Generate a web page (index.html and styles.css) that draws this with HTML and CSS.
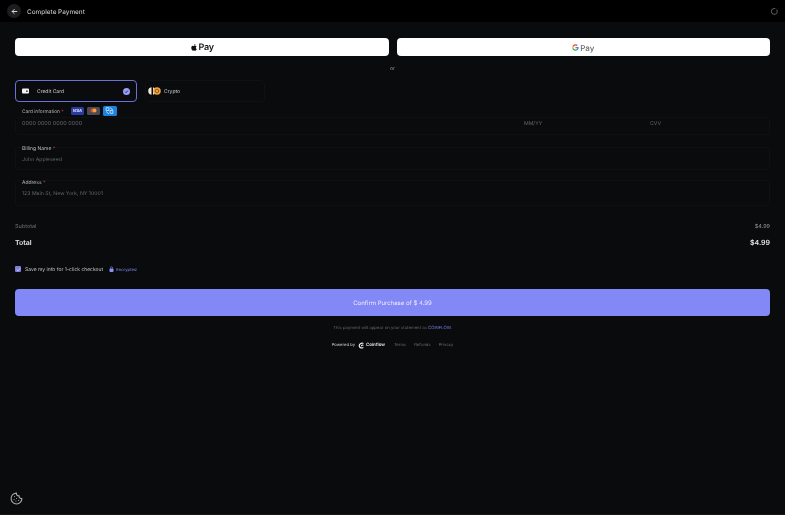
FILE: index.html
```html
<!DOCTYPE html>
<html lang="en">
<head>
<meta charset="utf-8">
<title>Complete Payment</title>
<link rel="stylesheet" href="styles.css">
</head>
<body>
<div class="page">
  <header class="top">
    <div class="top-left">
      <button class="back" aria-label="Back">
        <svg width="7" height="7" viewBox="0 0 24 24" fill="none" stroke="#d8d8d8" stroke-width="3.4" stroke-linecap="round" stroke-linejoin="round"><path d="M20 12H4M11 5l-7 7 7 7"/></svg>
      </button>
      <span class="title">Complete Payment</span>
    </div>
    <svg class="spinner" width="7" height="7" viewBox="0 0 24 24" fill="none" stroke="#5a5a5a" stroke-width="3.5" stroke-linecap="round"><path d="M20 7a10 10 0 1 1-6-4.8"/></svg>
  </header>
  <main class="main">
    <div class="wallets">
      <button class="wallet apple"><svg width="8" height="9" viewBox="0 0 24 24" fill="#111"><path d="M17.6 12.7c0-2.6 2.1-3.8 2.2-3.9-1.2-1.8-3.1-2-3.7-2-1.6-.2-3.1.9-3.9.9s-2-.9-3.3-.9c-1.7 0-3.3 1-4.2 2.5-1.8 3.1-.5 7.7 1.3 10.2.9 1.2 1.9 2.6 3.2 2.5 1.3-.1 1.8-.8 3.3-.8s2 .8 3.3.8c1.4 0 2.2-1.2 3.1-2.5 1-1.4 1.4-2.8 1.4-2.9-.1 0-2.7-1-2.7-4.4zM15.1 5c.7-.9 1.2-2 1-3.2-1 0-2.2.7-3 1.5-.6.7-1.2 1.9-1 3.1 1.1 0 2.3-.6 3-1.4z"/></svg><span class="apple-text">Pay</span></button>
      <button class="wallet google"><svg width="7" height="7" viewBox="0 0 24 24"><path fill="#4285f4" d="M23 12.3c0-.8-.1-1.600-.2-2.300H12v4.400h6.200c-.3 1.400-1.100 2.600-2.300 3.400v2.800h3.700c2.200-2 3.400-5 3.400-8.300z"/><path fill="#34a853" d="M12 23.500c3.100 0 5.700-1 7.600-2.800l-3.700-2.900c-1 .7-2.300 1.100-3.900 1.100-3 0-5.500-2-6.400-4.700H1.800V17.100c1.900 3.800 5.800 6.400 10.200 6.400z"/><path fill="#fbbc05" d="M5.600 14.200c-.5-1.400-.5-3 0-4.400V6.900H1.800c-1.600 3.200-1.600 7 0 10.200z"/><path fill="#ea4335" d="M12 5c1.700 0 3.200.6 4.400 1.700l3.300-3.300C17.700 1.500 15.100.5 12 .5 7.600.5 3.700 3.100 1.800 6.900l3.800 2.900C6.500 7 9 5 12 5z"/></svg><span class="google-text">Pay</span></button>
    </div>
    <div class="or">or</div>
    <div class="tabs">
      <div class="tab tab-active">
        <svg class="tab-card" width="7" height="6" viewBox="0 0 14 12"><rect y="1" width="14" height="10" rx="2" fill="#f2f2f2"/><rect x="8" y="5" width="3.500" height="2.500" fill="#222"/></svg>
        <span class="tab-label">Credit Card</span>
        <svg class="tab-check" width="7" height="7" viewBox="0 0 14 14"><circle cx="7" cy="7" r="7" fill="#9a9ef8"/><path d="M4 7.200l2.100 2.100L10 5" fill="none" stroke="#1b1d60" stroke-width="1.900"/></svg>
      </div>
      <div class="tab tab-plain">
        <svg width="13" height="8" viewBox="0 0 26 16"><circle cx="8" cy="8" r="7.500" fill="#f3ead9"/><rect x="7" y="0" width="3" height="16" fill="#0a0b0d"/><circle cx="18" cy="8" r="7.500" fill="#f0a23e"/><circle cx="18" cy="8" r="3.500" fill="none" stroke="#7a4a10" stroke-width="1.500"/></svg>
        <span class="tab-label">Crypto</span>
      </div>
    </div>
    <div class="card-label-row">
      <span class="label label-card">Card information <em>*</em></span>
      <span class="brand visa">VISA</span>
      <span class="brand mc"><svg width="7" height="5" viewBox="0 0 14 10"><circle cx="5" cy="5" r="4" fill="#e8432e"/><circle cx="9" cy="5" r="4" fill="#f3a23a"/></svg></span>
      <span class="brand amex"><svg width="9" height="9" viewBox="0 0 16 16" fill="none" stroke="#cfe6fb" stroke-width="1.500"><path d="M2 3h5v5H2zM9 8h5v5H9zM9 3l5 4M2 10l5 4"/></svg></span>
    </div>
    <div class="field card-row">
      <span class="ph ph-num">0000 0000 0000 0000</span>
      <span class="ph ph-exp">MM/YY</span>
      <span class="ph ph-cvv">CVV</span>
    </div>
    <div class="field field-name">
      <span class="label">Billing Name <em>*</em></span>
      <span class="ph">John Appleseed</span>
    </div>
    <div class="field field-addr">
      <span class="label">Address <em>*</em></span>
      <span class="ph">123 Main St, New York, NY 10001</span>
    </div>
    <div class="line subtotal"><span>Subtotal</span><span>$4.99</span></div>
    <div class="line total"><span>Total</span><span>$4.99</span></div>
    <div class="save">
      <span class="check"><svg width="5" height="5" viewBox="0 0 10 10"><path d="M1.500 5.200l2.300 2.300L8.500 2.500" fill="none" stroke="#e6e8ff" stroke-width="1.500"/></svg></span>
      <span class="save-text">Save my info for 1-click checkout</span>
      <svg class="lock" width="5" height="6" viewBox="0 0 10 12"><rect x="1" y="5" width="8" height="7" rx="1.500" fill="#8b90f5"/><path d="M3 5V3.500a2 2 0 0 1 4 0V5" fill="none" stroke="#8b90f5" stroke-width="1.300"/></svg>
      <span class="enc">Encrypted</span>
    </div>
    <button class="confirm"><span class="confirm-text">Confirm Purchase of $ 4.99</span></button>
    <p class="statement">This payment will appear on your statement as <b>COINFLOW.</b></p>
    <div class="foot">
      <span class="powered">Powered by</span>
      <svg class="cf-logo" width="6" height="7" viewBox="0 0 12 14" fill="none" stroke="#ececec" stroke-width="2.400" stroke-linecap="round"><path d="M10 2.500C6 1.500 2.500 4 2.500 7.500S6 12.500 10 11.500"/><path d="M10 6.500C8.500 6 7 6.500 7 7.500"/></svg>
      <span class="cf-name">Coinflow</span>
      <span class="foot-links"><span>Terms</span><span>Refunds</span><span>Privacy</span></span>
    </div>
  </main>
  <button class="cookie" aria-label="Cookies">
    <svg width="13" height="13" viewBox="0 0 24 24" fill="none" stroke="#a8a8a8" stroke-width="2" stroke-linecap="round" stroke-linejoin="round"><path d="M12 2a10 10 0 1 0 10 10 4 4 0 0 1-5-5 4 4 0 0 1-5-5z"/><path d="M8.500 8.500h.01M16 15.500h.01M11 16.500h.01M7.500 14h.01M12 12h.01"/></svg>
  </button>
</div>
</body>
</html>
```
FILE: styles.css
```css
* { box-sizing: border-box; }
html, body { margin: 0; height: 100%; }
body { background: #0a0b0d; font-family: Inter, "Liberation Sans", sans-serif; color: #ddd; overflow: hidden; text-rendering: geometricPrecision; }
button { font-family: inherit; border: 0; padding: 0; cursor: pointer; text-rendering: inherit; }
.page { position: relative; height: 515px; display: flex; flex-direction: column; border-bottom: 1px solid #17181a; filter: blur(.45px); }
.top { height: 22px; background: #000; display: flex; align-items: center; justify-content: space-between; padding: 0 7px; flex: none; }
.top-left { display: flex; align-items: center; gap: 6px; }
.back { width: 14px; height: 14px; border-radius: 50%; background: #1c1d1f; display: flex; align-items: center; justify-content: center; }
.title { font-size: 6.400px; font-weight: 500; color: #c4c4c4; opacity: .99; padding-top: 1px; }
.main { padding: 16px 15px 0; flex: 1; }
.wallets { display: flex; gap: 8px; }
.wallet { flex: 1; height: 18px; background: #fff; border-radius: 4px; display: flex; align-items: center; justify-content: center; gap: 1px; }
.apple-text { font-size: 9px; font-weight: 600; color: #111; letter-spacing: -.2px; opacity: .99; padding-top: 1px; }
.google-text { font-size: 8px; font-weight: 500; color: #666; opacity: .99; padding-top: 1px; }
.or { height: 24px; font-size: 5px; color: #999; display: flex; align-items: center; justify-content: center; padding-top: 1px; }
.tabs { display: flex; gap: 8px; }
.tab { width: 122px; height: 22px; border-radius: 4px; display: flex; align-items: center; padding: 0 7px; }
.tab-active { border: 1.300px solid #6d70d8; }
.tab-plain { width: 120px; border: 1px solid #0f1114; padding-left: 2px; gap: 3px; }
.tab-card { margin-right: 8px; margin-left: -1px; }
.tab-label { font-size: 5px; color: #d0d0d0; padding-top: 2px; }
.tab-check { margin-left: auto; margin-right: -1px; }
.card-label-row { display: flex; align-items: center; height: 13px; padding-left: 7px; margin-top: 2px; }
.label { font-size: 5px; color: #b8b8b8; }
.label-card { font-size: 4.800px; padding-top: 2px; }
.label em { font-style: normal; color: #c33; }
.brand { height: 8px; border-radius: 1.500px; display: flex; align-items: center; justify-content: center; font-size: 4px; font-weight: 700; font-style: italic; color: #dfe3ff; width: 13px; }
.visa { background: #2c3a9e; margin-left: 7px; }
.mc { background: #4a4c55; margin-left: 3px; }
.amex { background: #1b82e0; margin-left: 3px; width: 14px; height: 10px; }
.field { border: 1px solid #0e1013; border-radius: 3px; padding: 0 6px; }
.ph { font-size: 5.200px; color: #66676a; line-height: 6px; }
.card-row { height: 18px; display: flex; align-items: flex-start; padding-top: 3px; }
.ph-num { width: 502px; font-size: 5.500px; }
.ph-exp { width: 126px; }
.field-name { height: 23px; margin-top: 12px; display: flex; flex-direction: column; gap: 4px; }
.field-name .label, .field-addr .label { color: #bcbcbc; line-height: 7px; }
.field-name .label { margin-top: -2px; }
.field-addr { height: 26px; margin-top: 10px; display: flex; flex-direction: column; gap: 4px; }
.field-addr .label { margin-top: -1px; }
.line { display: flex; justify-content: space-between; align-items: center; }
.subtotal { font-size: 5.500px; color: #6e6f72; margin-top: 17px; height: 8px; }
.subtotal span:last-child { color: #959595; }
.total { font-size: 7px; font-weight: 600; color: #e8e8e8; margin-top: 7px; height: 8px; }
.save { display: flex; align-items: center; margin-top: 19px; height: 8px; }
.check { width: 6px; height: 6px; border-radius: 1px; background: #7d80dc; display: flex; align-items: center; justify-content: center; }
.save-text { font-size: 5px; color: #c4c4c4; margin-left: 4px; padding-top: 2px; }
.lock { margin-left: 6px; }
.enc { font-size: 4.200px; color: #8388ee; margin-left: 2px; padding-top: 2px; }
.confirm { display: block; width: 100%; height: 27px; margin-top: 16px; border-radius: 4px; background: #8288f5; color: #eef; font-size: 6px; font-weight: 400; padding-top: 2px; }
.confirm-text { opacity: .99; }
.statement { margin: 9px 0 0; text-align: center; font-size: 4.250px; color: #66676a; line-height: 7px; }
.statement b { font-weight: 400; color: #7a7fe8; }
.foot { display: flex; align-items: center; justify-content: center; margin-top: 9.500px; height: 7px; }
.powered { font-size: 4.200px; color: #cfcfcf; }
.cf-logo { margin-left: 3px; }
.cf-name { font-size: 4.400px; font-weight: 600; color: #e4e4e4; margin-left: 2px; }
.foot-links { display: flex; gap: 8px; font-size: 4.200px; color: #6a6b6e; margin-left: 9px; }
.cookie { position: absolute; left: 9px; bottom: 9px; width: 14px; height: 14px; background: transparent; display: flex; align-items: center; justify-content: center; }
```
